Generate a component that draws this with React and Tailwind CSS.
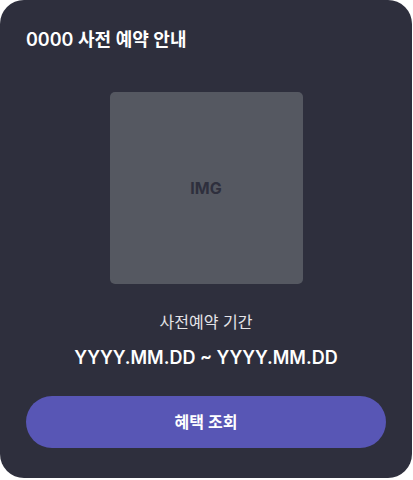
export default function App() {
  const font = { fontFamily: '"Inter", "Noto Sans CJK KR", "Noto Sans", sans-serif' };
  return (
    <div className="w-[413px] h-[480px] bg-white">
      <div
        className="w-[412px] h-[478px] rounded-[24px] bg-[#2e2f3d] flex flex-col px-[26px] pt-[26px]"
        style={font}
      >
        <h1 className="text-[18px] leading-[28px] font-semibold text-white">0000 사전 예약 안내</h1>
        <div className="flex justify-center mt-[38px]">
          <div className="w-[193px] h-[192px] rounded-[5px] bg-[#555861] flex items-center justify-center">
            <span className="text-[16px] font-bold text-[#2e2f3d]">IMG</span>
          </div>
        </div>
        <p className="mt-[26px] text-center text-[16px] leading-[24px] text-[#e4e4e8]">사전예약 기간</p>
        <p className="mt-[10px] text-center text-[18px] leading-[28px] font-semibold text-white">YYYY.MM.DD ~ YYYY.MM.DD</p>
        <button className="mt-[24px] h-[52px] w-full rounded-full bg-[#5856b5] text-white text-[16px] font-semibold">
          혜택 조회
        </button>
      </div>
    </div>
  );
}
